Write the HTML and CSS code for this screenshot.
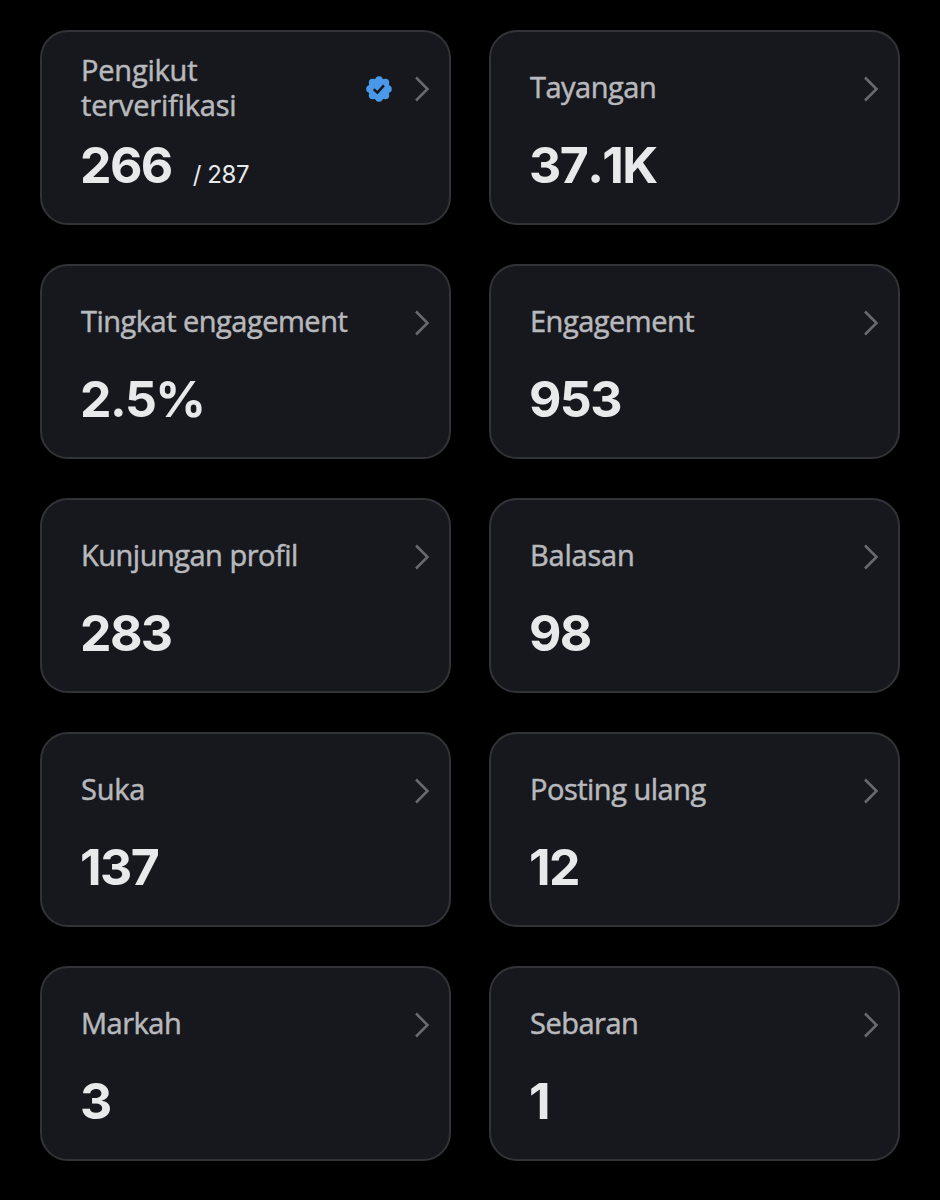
FILE: index.html
```html
<!DOCTYPE html>
<html lang="id">
  <head>
    <meta charset="UTF-8" />
    <title>Analitik</title>
    <link rel="stylesheet" href="styles.css">
  </head>
  <body>
    <!-- Ikon yang dipakai berulang -->
    <svg class="sprite">
      <symbol id="chevron" viewBox="0 0 16 28">
        <path d="M2 2.5 L13.5 14 L2 25.5" />
      </symbol>
    </svg>

    <div class="stats">
      <div class="card">
        <div class="card-head">
          <span class="label wide">Pengikut<br>terverifikasi</span>
          <svg class="badge" viewBox="0 0 26 26">
            <g class="badge-shape">
              <circle cx="13" cy="13" r="10.8" />
              <circle cx="13" cy="4" r="3.8" />
              <circle cx="19.4" cy="6.6" r="3.8" />
              <circle cx="22" cy="13" r="3.8" />
              <circle cx="19.4" cy="19.4" r="3.8" />
              <circle cx="13" cy="22" r="3.8" />
              <circle cx="6.6" cy="19.4" r="3.8" />
              <circle cx="4" cy="13" r="3.8" />
              <circle cx="6.6" cy="6.6" r="3.8" />
            </g>
            <path class="badge-check" d="M7.7 13.2 L11.4 16.7 L17.9 9.4" />
          </svg>
          <svg class="chevron"><use href="#chevron" /></svg>
        </div>
        <div class="value">266<span class="total">/ 287</span></div>
      </div>

      <div class="card">
        <div class="card-head">
          <span class="label">Tayangan</span>
          <svg class="chevron"><use href="#chevron" /></svg>
        </div>
        <div class="value">37.1K</div>
      </div>

      <div class="card">
        <div class="card-head">
          <span class="label">Tingkat engagement</span>
          <svg class="chevron"><use href="#chevron" /></svg>
        </div>
        <div class="value">2.5%</div>
      </div>

      <div class="card">
        <div class="card-head">
          <span class="label">Engagement</span>
          <svg class="chevron"><use href="#chevron" /></svg>
        </div>
        <div class="value">953</div>
      </div>

      <div class="card">
        <div class="card-head">
          <span class="label">Kunjungan profil</span>
          <svg class="chevron"><use href="#chevron" /></svg>
        </div>
        <div class="value">283</div>
      </div>

      <div class="card">
        <div class="card-head">
          <span class="label wide">Balasan</span>
          <svg class="chevron"><use href="#chevron" /></svg>
        </div>
        <div class="value">98</div>
      </div>

      <div class="card">
        <div class="card-head">
          <span class="label wide">Suka</span>
          <svg class="chevron"><use href="#chevron" /></svg>
        </div>
        <div class="value">137</div>
      </div>

      <div class="card">
        <div class="card-head">
          <span class="label">Posting ulang</span>
          <svg class="chevron"><use href="#chevron" /></svg>
        </div>
        <div class="value">12</div>
      </div>

      <div class="card">
        <div class="card-head">
          <span class="label">Markah</span>
          <svg class="chevron"><use href="#chevron" /></svg>
        </div>
        <div class="value">3</div>
      </div>

      <div class="card">
        <div class="card-head">
          <span class="label">Sebaran</span>
          <svg class="chevron"><use href="#chevron" /></svg>
        </div>
        <div class="value">1</div>
      </div>
    </div>
  </body>
</html>
```
FILE: styles.css
```css
* {
  box-sizing: border-box;
}

body {
  margin: 0;
  height: 1200px;
  background: #000;
  overflow: hidden;
}

.sprite {
  display: none;
}

.stats {
  display: grid;
  grid-template-columns: 411px 411px;
  grid-auto-rows: 195px;
  gap: 39px 38px;
  padding: 30px 40px;
}

.card {
  background: #17181d;
  border: 2px solid #323336;
  border-radius: 28px;
  padding: 21px 19px 0 39px;
}

.card-head {
  display: flex;
  align-items: center;
  height: 70px;
  padding-bottom: 3px;
}

.label {
  flex: 1;
  color: #b8b9bd;
  font-family: "Open Sans", sans-serif;
  font-size: 29px;
  line-height: 35px;
  letter-spacing: -0.5px;
  white-space: nowrap;
  -webkit-text-stroke: 0.5px #b8b9bd;
}

.label.wide {
  letter-spacing: -0.2px;
}

.badge {
  width: 26px;
  height: 26px;
  margin: 5px 22px 0 0;
}

.badge-shape {
  fill: #4a99e9;
}

.badge-check {
  fill: none;
  stroke: #17181d;
  stroke-width: 2.5;
}

.chevron {
  width: 16px;
  height: 28px;
  margin-top: 5px;
  fill: none;
  stroke: #68696d;
  stroke-width: 2.6;
}

.value {
  margin-top: 12px;
  margin-left: -1px;
  color: #e7e9ea;
  font-family: Inter, sans-serif;
  font-size: 50px;
  font-weight: 700;
  font-kerning: none;
  line-height: 60px;
  letter-spacing: -1.6px;
}

.total {
  margin-left: 21px;
  font-size: 24px;
  font-weight: 400;
  letter-spacing: -0.4px;
}
```
